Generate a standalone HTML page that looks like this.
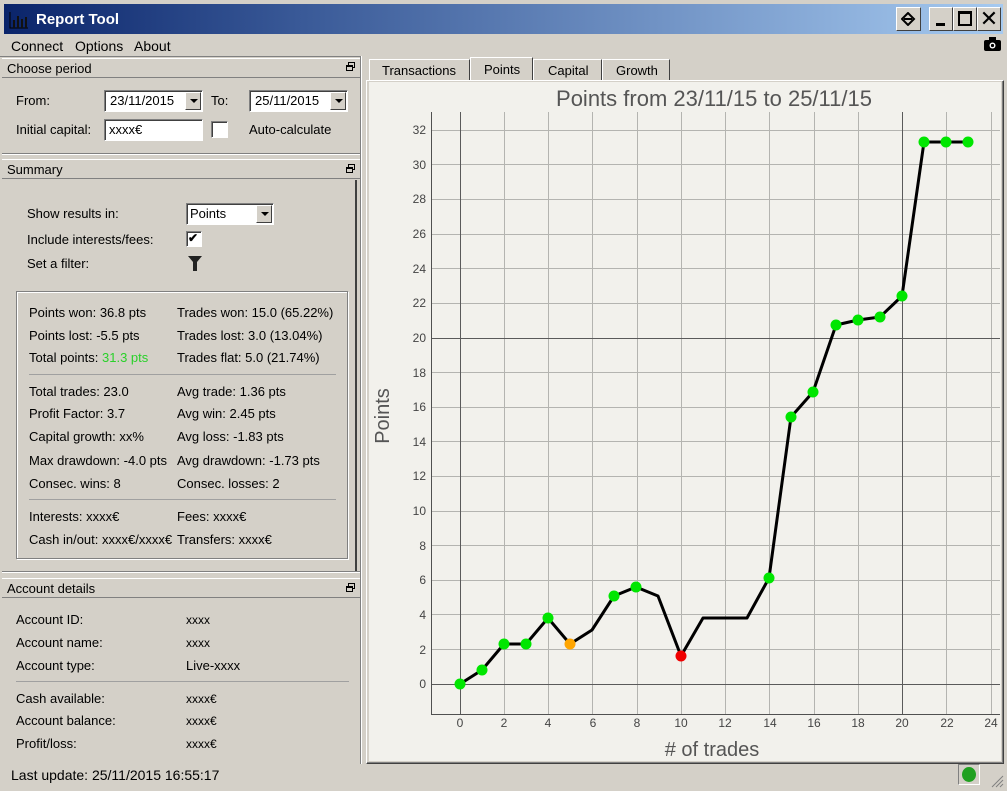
<!DOCTYPE html>
<html><head><meta charset="utf-8"><style>
*{margin:0;padding:0;box-sizing:border-box}
body{width:1007px;height:791px;background:#d4d0c8;font:13px "Liberation Sans",sans-serif;color:#000;position:relative;overflow:hidden}
.a{position:absolute;white-space:nowrap;line-height:16px}
.box{position:absolute}
.hdr{position:absolute;left:2px;width:358px;height:20px;border-bottom:1px solid #808080;border-top:1px solid #fff}
.fl{position:absolute;right:6px;top:4px;width:9px;height:9px}
.inp{position:absolute;background:#fff;border:1px solid #808080;border-right-color:#fff;border-bottom-color:#fff;box-shadow:inset 1px 1px 0 #404040}
.dd{position:absolute;width:16px;background:#d4d0c8;border:1px solid #fff;border-right-color:#404040;border-bottom-color:#404040}
.dd:after{content:"";position:absolute;left:4px;top:6px;border:4px solid transparent;border-top:4px solid #000;border-bottom:0}
.sep{position:absolute;height:1px;background:#a0a0a0}
</style></head><body>
<!-- title bar -->
<div class="box" style="left:0;top:0;width:1007px;height:37px;background:#d4d0c8"></div>
<div class="box" style="left:4px;top:4px;width:999px;height:30px;background:linear-gradient(90deg,#0a246a 0%,#3a5a98 30%,#a6caf0 100%)"></div>
<svg class="box" style="left:9px;top:11px" width="20" height="18"><path d="M1 1v16h18" stroke="#000" fill="none"/><rect x="4" y="9" width="2" height="8" fill="#111"/><rect x="8" y="5" width="2" height="12" fill="#111"/><rect x="12" y="8" width="2" height="9" fill="#111"/><rect x="16" y="6" width="2" height="11" fill="#111"/></svg>
<div class="a" style="left:36px;top:12px;color:#fff;font-weight:bold;font-size:15px">Report Tool</div>
<div class="box" style="left:896px;top:7px;width:25px;height:24px;background:#d4d0c8;border:1px solid #fff;border-right-color:#404040;border-bottom-color:#404040"><svg class="box" style="left:4px;top:4px" width="15" height="14"><path d="M1 7L7 1L13 7L7 13Z" fill="none" stroke="#000" stroke-width="2"/><path d="M3 7H11" stroke="#000" stroke-width="2"/></svg></div>
<div class="box" style="left:929px;top:7px;width:24px;height:24px;background:#d4d0c8;border:1px solid #fff;border-right-color:#404040;border-bottom-color:#404040"><div class="box" style="left:6px;top:15px;width:9px;height:3px;background:#000"></div></div>
<div class="box" style="left:953px;top:7px;width:24px;height:24px;background:#d4d0c8;border:1px solid #fff;border-right-color:#404040;border-bottom-color:#404040"><div class="box" style="left:4px;top:3px;width:14px;height:15px;border:2px solid #000;border-top-width:3px"></div></div>
<div class="box" style="left:977px;top:7px;width:24px;height:24px;background:#d4d0c8;border:1px solid #fff;border-right-color:#404040;border-bottom-color:#404040;text-align:center;font-size:22px;line-height:21px">&#x2715;</div>
<!-- menu -->
<div class="a" style="left:11px;top:38px;font-size:14px">Connect</div>
<div class="a" style="left:75px;top:38px;font-size:14px">Options</div>
<div class="a" style="left:134px;top:38px;font-size:14px">About</div>
<svg class="box" style="left:984px;top:37px" width="17" height="14"><rect x="0" y="3" width="17" height="11" rx="2" fill="#000"/><rect x="5" y="0" width="7" height="4" fill="#000"/><circle cx="8.5" cy="8.5" r="3" fill="#fff"/><circle cx="8.5" cy="8.5" r="1.6" fill="#000"/></svg>
<!-- left panel borders -->
<div class="box" style="left:0;top:56px;width:362px;height:1px;background:#808080"></div>
<div class="box" style="left:360px;top:56px;width:2px;height:708px;border-left:1px solid #808080;border-right:1px solid #fff"></div>
<div class="box" style="left:355px;top:180px;width:2px;height:392px;background:#404040"></div>
<!-- Choose period -->
<div class="hdr" style="top:58px"></div>
<div class="a" style="left:7px;top:61px">Choose period</div>
<svg class="fl" style="left:346px;top:62px" width="9" height="9"><rect x="2.5" y=".5" width="6" height="5" fill="none" stroke="#000"/><rect x=".5" y="3.5" width="6" height="5" fill="#d4d0c8" stroke="#000"/><rect x=".5" y="3.5" width="6" height="1.5" fill="#000"/></svg>
<div class="a" style="left:16px;top:93px">From:</div>
<div class="inp" style="left:104px;top:90px;width:99px;height:22px"></div>
<div class="a" style="left:110px;top:93px">23/11/2015</div>
<div class="dd" style="left:185px;top:92px;height:18px"></div>
<div class="a" style="left:211px;top:93px">To:</div>
<div class="inp" style="left:249px;top:90px;width:99px;height:22px"></div>
<div class="a" style="left:255px;top:93px">25/11/2015</div>
<div class="dd" style="left:330px;top:92px;height:18px"></div>
<div class="a" style="left:16px;top:122px">Initial capital:</div>
<div class="inp" style="left:104px;top:119px;width:99px;height:22px"></div>
<div class="a" style="left:109px;top:122px">xxxx€</div>
<div class="inp" style="left:211px;top:121px;width:17px;height:17px"></div>
<div class="a" style="left:249px;top:122px">Auto-calculate</div>
<div class="box" style="left:2px;top:153px;width:358px;height:2px;border-top:1px solid #808080;border-bottom:1px solid #fff"></div>
<!-- Summary -->
<div class="hdr" style="top:159px"></div>
<div class="a" style="left:7px;top:162px">Summary</div>
<svg class="fl" style="left:346px;top:164px" width="9" height="9"><rect x="2.5" y=".5" width="6" height="5" fill="none" stroke="#000"/><rect x=".5" y="3.5" width="6" height="5" fill="#d4d0c8" stroke="#000"/><rect x=".5" y="3.5" width="6" height="1.5" fill="#000"/></svg>
<div class="a" style="left:27px;top:206px">Show results in:</div>
<div class="inp" style="left:186px;top:203px;width:88px;height:22px"></div>
<div class="a" style="left:190px;top:206px">Points</div>
<div class="dd" style="left:256px;top:205px;height:18px"></div>
<div class="a" style="left:27px;top:232px">Include interests/fees:</div>
<div class="inp" style="left:186px;top:231px;width:16px;height:16px"></div>
<div class="a" style="left:188px;top:230px;font-size:12px;font-weight:bold">&#x2714;</div>
<div class="a" style="left:27px;top:256px">Set a filter:</div>
<svg class="box" style="left:187px;top:255px" width="16" height="17"><path d="M1 1h14l-5 6v9h-4v-9z" fill="#222"/></svg>
<div class="box" style="left:16px;top:291px;width:332px;height:268px;border:1px solid #808080;box-shadow:inset 1px 1px 0 #fff,1px 1px 0 #fff"></div>
<div class="a" style="left:29px;top:305px">Points won: 36.8 pts</div>
<div class="a" style="left:177px;top:305px">Trades won: 15.0 (65.22%)</div>
<div class="a" style="left:29px;top:328px">Points lost: -5.5 pts</div>
<div class="a" style="left:177px;top:328px">Trades lost: 3.0 (13.04%)</div>
<div class="a" style="left:29px;top:350px">Total points: <span style="color:#2ad12a">31.3 pts</span></div>
<div class="a" style="left:177px;top:350px">Trades flat: 5.0 (21.74%)</div>
<div class="sep" style="left:29px;top:374px;width:307px"></div>
<div class="a" style="left:29px;top:384px">Total trades: 23.0</div>
<div class="a" style="left:177px;top:384px">Avg trade: 1.36 pts</div>
<div class="a" style="left:29px;top:406px">Profit Factor: 3.7</div>
<div class="a" style="left:177px;top:406px">Avg win: 2.45 pts</div>
<div class="a" style="left:29px;top:429px">Capital growth: xx%</div>
<div class="a" style="left:177px;top:429px">Avg loss: -1.83 pts</div>
<div class="a" style="left:29px;top:453px">Max drawdown: -4.0 pts</div>
<div class="a" style="left:177px;top:453px">Avg drawdown: -1.73 pts</div>
<div class="a" style="left:29px;top:476px">Consec. wins: 8</div>
<div class="a" style="left:177px;top:476px">Consec. losses: 2</div>
<div class="sep" style="left:29px;top:499px;width:307px"></div>
<div class="a" style="left:29px;top:509px">Interests: xxxx€</div>
<div class="a" style="left:177px;top:509px">Fees: xxxx€</div>
<div class="a" style="left:29px;top:532px">Cash in/out: xxxx€/xxxx€</div>
<div class="a" style="left:177px;top:532px">Transfers: xxxx€</div>
<div class="box" style="left:2px;top:571px;width:358px;height:2px;border-top:1px solid #808080;border-bottom:1px solid #fff"></div>
<!-- Account details -->
<div class="hdr" style="top:578px"></div>
<div class="a" style="left:7px;top:581px">Account details</div>
<svg class="fl" style="left:346px;top:583px" width="9" height="9"><rect x="2.5" y=".5" width="6" height="5" fill="none" stroke="#000"/><rect x=".5" y="3.5" width="6" height="5" fill="#d4d0c8" stroke="#000"/><rect x=".5" y="3.5" width="6" height="1.5" fill="#000"/></svg>
<div class="a" style="left:16px;top:612px">Account ID:</div><div class="a" style="left:186px;top:612px;font-size:12px">xxxx</div>
<div class="a" style="left:16px;top:635px">Account name:</div><div class="a" style="left:186px;top:635px;font-size:12px">xxxx</div>
<div class="a" style="left:16px;top:658px">Account type:</div><div class="a" style="left:186px;top:658px">Live-xxxx</div>
<div class="sep" style="left:16px;top:681px;width:333px"></div>
<div class="a" style="left:16px;top:691px">Cash available:</div><div class="a" style="left:186px;top:691px;font-size:12px">xxxx€</div>
<div class="a" style="left:16px;top:713px">Account balance:</div><div class="a" style="left:186px;top:713px;font-size:12px">xxxx€</div>
<div class="a" style="left:16px;top:736px">Profit/loss:</div><div class="a" style="left:186px;top:736px;font-size:12px">xxxx€</div>
<!-- status bar -->
<div class="a" style="left:11px;top:767px;font-size:14px">Last update: 25/11/2015 16:55:17</div>
<div class="box" style="left:958px;top:764px;width:22px;height:21px;border:1px solid #808080;border-right-color:#fff;border-bottom-color:#fff"><div class="box" style="left:3px;top:2px;width:14px;height:15px;border-radius:50%;background:#20a020"></div></div>
<svg class="box" style="left:990px;top:774px" width="14" height="14"><path d="M13 2L2 13M13 6L6 13M13 10L10 13" stroke="#808080"/></svg>
<!-- tabs -->
<div class="box" style="left:369px;top:59px;width:101px;height:21px;border:1px solid #fff;border-bottom:0;border-right-color:#404040"></div>
<div class="a" style="left:382px;top:63px">Transactions</div>
<div class="box" style="left:470px;top:57px;width:63px;height:24px;border:1px solid #fff;border-bottom:0;border-right-color:#404040;background:#d4d0c8"></div>
<div class="a" style="left:484px;top:62px">Points</div>
<div class="box" style="left:533px;top:59px;width:69px;height:21px;border:1px solid #fff;border-bottom:0;border-right-color:#404040"></div>
<div class="a" style="left:548px;top:63px">Capital</div>
<div class="box" style="left:602px;top:59px;width:68px;height:21px;border:1px solid #fff;border-bottom:0;border-right-color:#404040"></div>
<div class="a" style="left:616px;top:63px">Growth</div>
<div class="box" style="left:366px;top:80px;width:638px;height:684px;border:1px solid #fff;border-right-color:#404040;border-bottom-color:#404040"></div>
<div class="box" style="left:367px;top:81px;width:636px;height:682px;border-right:1px solid #808080;border-bottom:1px solid #808080"></div>
<svg class="box" style="left:369px;top:82px" width="632" height="679" viewBox="369 82 632 679">
<rect x="369" y="82" width="632" height="679" fill="#f2f1ec"/>
<g stroke="#b4b4b0" stroke-width="1">
<path d="M431 649.5H1000M431 614.5H1000M431 580.5H1000M431 545.5H1000M431 511.5H1000M431 476.5H1000M431 441.5H1000M431 407.5H1000M431 372.5H1000M431 303.5H1000M431 268.5H1000M431 234.5H1000M431 199.5H1000M431 164.5H1000M431 130.5H1000"/>
<path d="M504.5 112V714M548.5 112V714M592.5 112V714M637.5 112V714M681.5 112V714M725.5 112V714M769.5 112V714M814.5 112V714M858.5 112V714M946.5 112V714M991.5 112V714"/>
</g>
<g stroke="#5a5a5a" stroke-width="1"><path d="M431 684.5H1000M431 338.5H1000M460.5 112V714M902.5 112V714"/></g>
<path d="M431.5 112V714.5H1000" stroke="#505050" fill="none"/>
<g font-family="Liberation Sans,sans-serif" font-size="12" fill="#444" text-anchor="end">
<text x="426" y="688">0</text><text x="426" y="654">2</text><text x="426" y="619">4</text><text x="426" y="584">6</text><text x="426" y="550">8</text><text x="426" y="515">10</text><text x="426" y="480">12</text><text x="426" y="446">14</text><text x="426" y="411">16</text><text x="426" y="377">18</text><text x="426" y="342">20</text><text x="426" y="307">22</text><text x="426" y="273">24</text><text x="426" y="238">26</text><text x="426" y="203">28</text><text x="426" y="169">30</text><text x="426" y="134">32</text>
</g>
<g font-family="Liberation Sans,sans-serif" font-size="12" fill="#444" text-anchor="middle">
<text x="460" y="727">0</text><text x="504" y="727">2</text><text x="548" y="727">4</text><text x="593" y="727">6</text><text x="637" y="727">8</text><text x="681" y="727">10</text><text x="725" y="727">12</text><text x="770" y="727">14</text><text x="814" y="727">16</text><text x="858" y="727">18</text><text x="902" y="727">20</text><text x="947" y="727">22</text><text x="991" y="727">24</text>
</g>
<text x="714" y="106" font-family="Liberation Sans,sans-serif" font-size="22" fill="#555" text-anchor="middle">Points from 23/11/15 to 25/11/15</text>
<text x="712" y="756" font-family="Liberation Sans,sans-serif" font-size="20" fill="#555" text-anchor="middle"># of trades</text>
<text transform="translate(389 416) rotate(-90)" font-family="Liberation Sans,sans-serif" font-size="20" fill="#555" text-anchor="middle">Points</text>
<polyline fill="none" stroke="#000" stroke-width="3" stroke-linejoin="round" points="460,684 482,670 504,644 526,644 548,618 570,644 592,630 614,596 636,587 658,596 681,656 703,618 725,618 747,618 769,578 791,417 813,392 836,325 858,320 880,317 902,296 924,142 946,142 968,142"/>
<g fill="#00e600">
<circle cx="460" cy="684" r="5.5"/><circle cx="482" cy="670" r="5.5"/><circle cx="504" cy="644" r="5.5"/><circle cx="526" cy="644" r="5.5"/><circle cx="548" cy="618" r="5.5"/><circle cx="614" cy="596" r="5.5"/><circle cx="636" cy="587" r="5.5"/><circle cx="769" cy="578" r="5.5"/><circle cx="791" cy="417" r="5.5"/><circle cx="813" cy="392" r="5.5"/><circle cx="836" cy="325" r="5.5"/><circle cx="858" cy="320" r="5.5"/><circle cx="880" cy="317" r="5.5"/><circle cx="902" cy="296" r="5.5"/><circle cx="924" cy="142" r="5.5"/><circle cx="946" cy="142" r="5.5"/><circle cx="968" cy="142" r="5.5"/>
</g>
<circle cx="570" cy="644" r="5.5" fill="#ffa500"/>
<circle cx="681" cy="656" r="5.5" fill="#f00000"/>
</svg>
</body></html>
